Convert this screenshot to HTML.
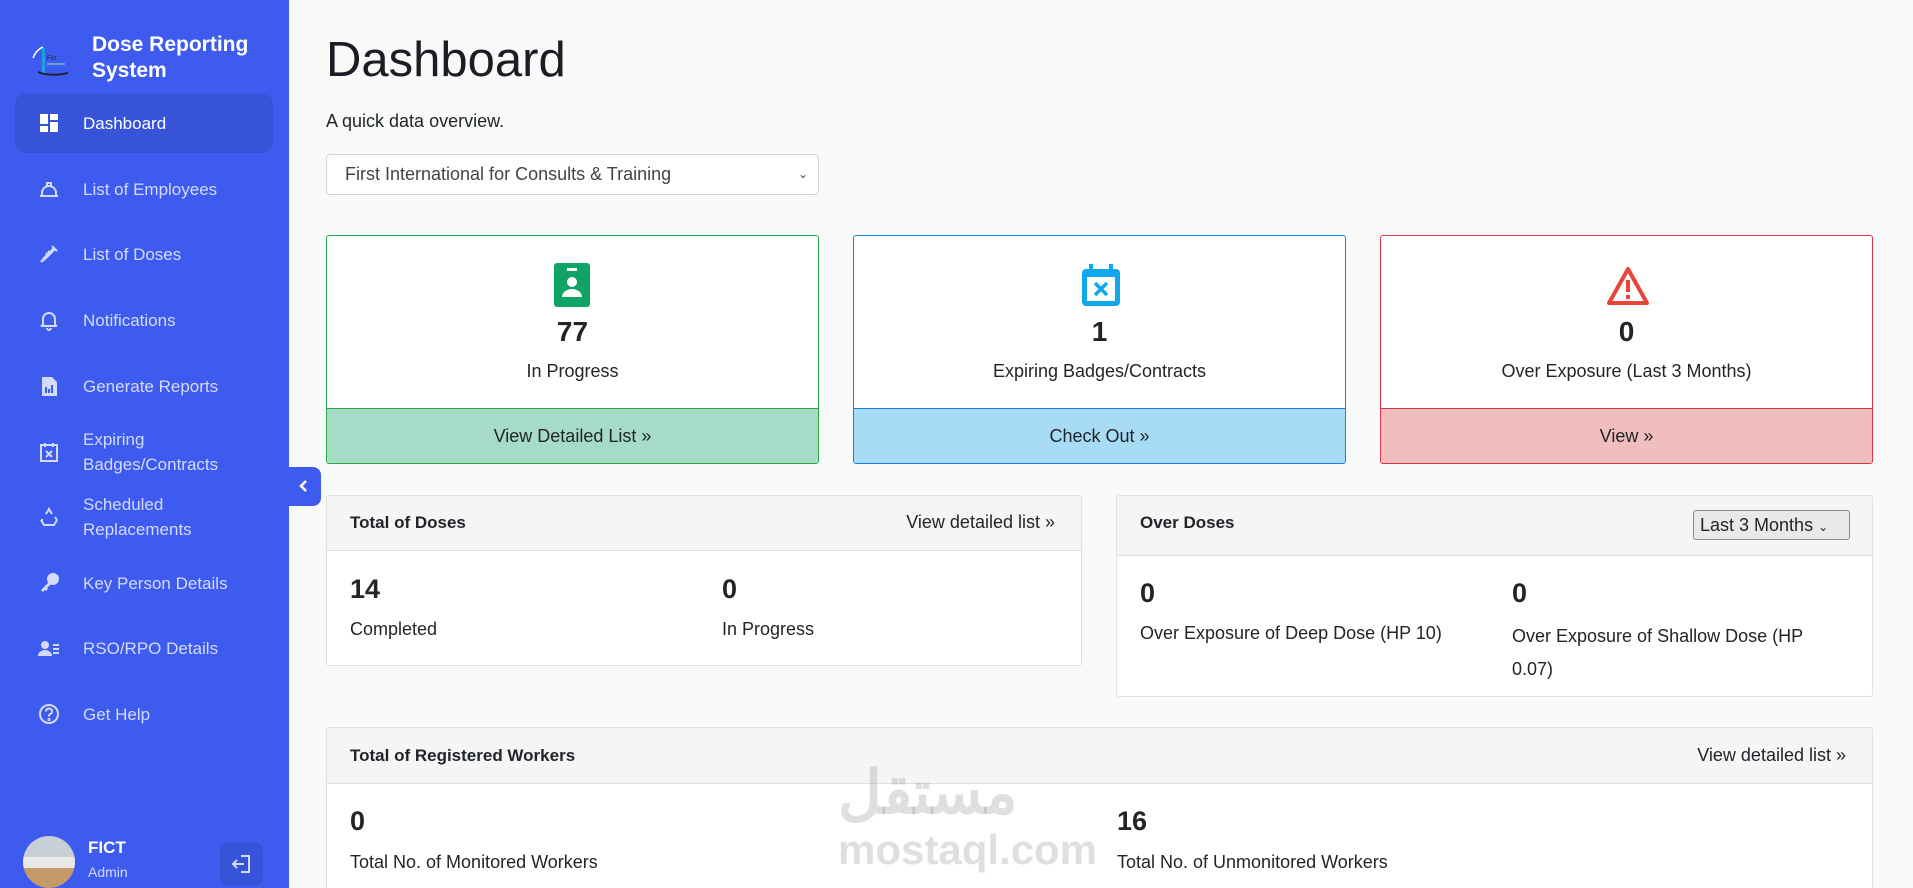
<!DOCTYPE html>
<html style="overflow:hidden;height:888px"><head><meta charset="utf-8"><style>
*{box-sizing:border-box;margin:0;padding:0}
html,body{overflow:hidden}
body{width:1913px;height:888px;background:#f8f9f9;font-family:"Liberation Sans",sans-serif;color:#212529;position:relative}
.abs{position:absolute}
.sb{left:0;top:0;width:289px;height:888px;background:#3e5bf0}
.nav{position:absolute;left:83px;color:#d4dafc;font-size:17px;line-height:25px}
.ic{position:absolute;left:38px;width:22px;height:22px}
.card{position:absolute;top:235px;height:229px;background:#fff;border:1px solid;border-radius:3px;overflow:hidden;text-align:center}
.cf{position:absolute;left:0;right:0;bottom:0;height:55px;border-top:1px solid;font-size:18px;line-height:55px}
.panel{position:absolute;background:#fff;border:1px solid #dee2e6;border-radius:3px;overflow:hidden}
.ph{background:#f5f5f5;border-bottom:1px solid #dee2e6;position:absolute;left:0;right:0;top:0}
.b{font-weight:bold}
.big{font-size:27px;font-weight:bold;position:absolute}
.lbl{font-size:18px;position:absolute;line-height:27px}
</style></head><body>
<div class="abs sb">
 <svg class="abs" style="left:30px;top:44px" width="42" height="36" viewBox="0 0 42 36"><path d="M3 14 Q6 6 13 3" stroke="#fff" stroke-width="1.5" fill="none"/><rect x="12" y="4" width="3" height="26" fill="#1aa0e0"/><text x="17" y="16" font-size="6" fill="#222">Fict</text><rect x="17" y="19" width="18" height="2" fill="#6aa0d0"/><path d="M8 28 Q20 33 38 29" stroke="#223" stroke-width="2" fill="none"/></svg>
 <div class="abs b" style="left:92px;top:32px;color:#fff;font-size:21px;line-height:26px">Dose Reporting<br>System</div>
 <div class="abs" style="left:15px;top:94px;width:258px;height:59px;background:#3753d8;border-radius:10px"></div>
 <svg class="ic" style="top:112px" viewBox="0 0 22 22" fill="#fff"><rect x="2" y="2" width="8" height="10"/><rect x="12" y="2" width="8" height="6"/><rect x="2" y="14" width="8" height="6"/><rect x="12" y="10" width="8" height="10"/></svg>
 <div class="nav" style="top:111px;color:#fff">Dashboard</div>
 <svg class="ic" style="top:178px" viewBox="0 0 22 22" fill="none" stroke="#d4dafc" stroke-width="2"><path d="M2 18h18M4 18v-3a7 7 0 0 1 14 0v3M9 9V5h4v4"/></svg>
 <div class="nav" style="top:177px">List of Employees</div>
 <svg class="ic" style="top:243px" viewBox="0 0 22 22" fill="none" stroke="#d4dafc" stroke-width="2"><path d="M14 3l5 5M16 5l-10 10-3 4 4-3 10-10M8 10l2 2M10 8l2 2"/></svg>
 <div class="nav" style="top:242px">List of Doses</div>
 <svg class="ic" style="top:309px" viewBox="0 0 22 22" fill="none" stroke="#d4dafc" stroke-width="2"><path d="M5 16V10a6 6 0 0 1 12 0v6l2 1H3zM9 19a2 2 0 0 0 4 0"/></svg>
 <div class="nav" style="top:308px">Notifications</div>
 <svg class="ic" style="top:375px" viewBox="0 0 22 22" fill="#d4dafc"><path d="M4 2h10l5 5v14H4z"/><rect x="7" y="12" width="2" height="6" fill="#3e5bf0"/><rect x="10" y="14" width="2" height="4" fill="#3e5bf0"/><rect x="13" y="10" width="2" height="8" fill="#3e5bf0"/></svg>
 <div class="nav" style="top:374px">Generate Reports</div>
 <svg class="ic" style="top:441px" viewBox="0 0 22 22" fill="none" stroke="#d4dafc" stroke-width="2"><rect x="3" y="4" width="16" height="16"/><path d="M7 2v4M15 2v4M8 10l6 6M14 10l-6 6"/></svg>
 <div class="nav" style="top:427px">Expiring<br>Badges/Contracts</div>
 <svg class="ic" style="top:506px" viewBox="0 0 22 22" fill="none" stroke="#d4dafc" stroke-width="2"><path d="M8 8l3-5 3 5M3 14l3 5h10l3-5M5 14l-2 0M17 11l2 3"/></svg>
 <div class="nav" style="top:492px">Scheduled<br>Replacements</div>
 <svg class="ic" style="top:572px" viewBox="0 0 22 22" fill="#d4dafc"><circle cx="15" cy="7" r="6"/><path d="M11 10L3 18l2 2 2-2 1 1 2-2-1-1 4-4z"/></svg>
 <div class="nav" style="top:571px">Key Person Details</div>
 <svg class="ic" style="top:637px" viewBox="0 0 22 22" fill="#d4dafc"><circle cx="7" cy="8" r="4"/><path d="M0 19a7 6 0 0 1 14 0z"/><rect x="15" y="7" width="6" height="2"/><rect x="15" y="11" width="6" height="2"/><rect x="15" y="15" width="6" height="2"/></svg>
 <div class="nav" style="top:636px">RSO/RPO Details</div>
 <svg class="ic" style="top:703px" viewBox="0 0 22 22" fill="none" stroke="#d4dafc" stroke-width="2"><circle cx="11" cy="11" r="9"/><path d="M8 8.5a3 3 0 1 1 4 2.8c-1 .4-1 1-1 2.2"/><circle cx="11" cy="16.5" r=".6"/></svg>
 <div class="nav" style="top:702px">Get Help</div>
 <div class="abs" style="left:23px;top:836px;width:52px;height:52px;border-radius:50%;background:linear-gradient(#c8d0d6 0 40%,#e8e8e8 40% 62%,#c49a68 62%)"></div>
 <div class="abs b" style="left:88px;top:838px;color:#fff;font-size:17px">FICT</div>
 <div class="abs" style="left:88px;top:864px;color:#d4dafc;font-size:14px">Admin</div>
 <div class="abs" style="left:220px;top:842px;width:43px;height:44px;background:#3753d8;border-radius:8px"></div>
 <svg class="abs" style="left:231px;top:853px" width="22" height="22" viewBox="0 0 22 22" fill="none" stroke="#d4dafc" stroke-width="2"><path d="M10 3h8v16h-8M2 11h11M6 7l-4 4 4 4"/></svg>
</div>
<div class="abs" style="left:289px;top:467px;width:32px;height:39px;background:#3e5bf0;border-radius:0 8px 8px 0"></div>
<svg class="abs" style="left:296px;top:478px" width="16" height="16" viewBox="0 0 16 16"><path d="M10 3L5 8l5 5" stroke="#fff" stroke-width="2.5" fill="none"/></svg>

<div class="abs" style="left:326px;top:32px;font-size:49px;color:#1c1c24">Dashboard</div>
<div class="abs" style="left:326px;top:111px;font-size:18px">A quick data overview.</div>
<div class="abs" style="left:326px;top:154px;width:493px;height:41px;background:#fff;border:1px solid #ced4da;border-radius:4px;font-size:18px;line-height:39px;padding-left:18px;color:#444">First International for Consults &amp; Training<span style="position:absolute;right:10px;font-size:12px">&#8964;</span></div>

<div class="card" style="left:326px;width:493px;border-color:#28a745">
 <svg class="abs" style="left:227px;top:27px" width="36" height="44" viewBox="0 0 36 44"><rect width="36" height="44" rx="3" fill="#0fa365"/><rect x="13" y="5" width="10" height="3" fill="#fff"/><circle cx="18" cy="19" r="5" fill="#fff"/><path d="M8 34a10 8 0 0 1 20 0z" fill="#fff"/></svg>
 <div class="abs b" style="width:100%;top:80px;font-size:28px">77</div>
 <div class="abs" style="width:100%;top:125px;font-size:18px">In Progress</div>
 <div class="cf" style="background:#a6dbc8;border-color:#28a745">View Detailed List »</div>
</div>
<div class="card" style="left:853px;width:493px;border-color:#1a7fe8">
 <svg class="abs" style="left:226px;top:27px" width="42" height="44" viewBox="0 0 42 44"><rect x="2" y="6" width="38" height="37" rx="4" fill="#0fa8ec"/><rect x="9" y="1" width="4" height="8" fill="#0fa8ec"/><rect x="29" y="1" width="4" height="8" fill="#0fa8ec"/><rect x="7" y="14" width="28" height="24" fill="#fff"/><path d="M15 20l12 12M27 20L15 32" stroke="#0fa8ec" stroke-width="3.5"/></svg>
 <div class="abs b" style="width:100%;top:80px;font-size:28px">1</div>
 <div class="abs" style="width:100%;top:125px;font-size:18px">Expiring Badges/Contracts</div>
 <div class="cf" style="background:#a8dbf5;border-color:#1a7fe8">Check Out »</div>
</div>
<div class="card" style="left:1380px;width:493px;border-color:#dc3545">
 <svg class="abs" style="left:225px;top:30px" width="44" height="40" viewBox="0 0 44 40"><path d="M22 3L3 37h38z" fill="none" stroke="#e8443a" stroke-width="4" stroke-linejoin="round"/><rect x="20" y="14" width="4" height="12" fill="#e8443a"/><rect x="20" y="29" width="4" height="4" fill="#e8443a"/></svg>
 <div class="abs b" style="width:100%;top:80px;font-size:28px">0</div>
 <div class="abs" style="width:100%;top:125px;font-size:18px">Over Exposure (Last 3 Months)</div>
 <div class="cf" style="background:#f0bebe;border-color:#dc3545">View »</div>
</div>

<div class="panel" style="left:326px;top:495px;width:756px;height:171px">
 <div class="ph" style="height:55px"></div>
 <div class="abs b" style="left:23px;top:17px;font-size:17px">Total of Doses</div>
 <div class="abs" style="right:26px;top:16px;font-size:18px">View detailed list »</div>
 <div class="big" style="left:23px;top:78px">14</div><div class="lbl" style="left:23px;top:120px">Completed</div>
 <div class="big" style="left:395px;top:78px">0</div><div class="lbl" style="left:395px;top:120px">In Progress</div>
</div>
<div class="panel" style="left:1116px;top:495px;width:757px;height:202px">
 <div class="ph" style="height:60px"></div>
 <div class="abs b" style="left:23px;top:17px;font-size:17px">Over Doses</div>
 <div class="abs" style="left:576px;top:14px;width:157px;height:30px;border:1px solid #888;border-radius:3px;background:#e9e9ea;font-size:18px;line-height:28px;padding-left:6px">Last 3 Months <span style="font-size:12px">&#8964;</span></div>
 <div class="big" style="left:23px;top:82px">0</div><div class="lbl" style="left:23px;top:124px">Over Exposure of Deep Dose (HP 10)</div>
 <div class="big" style="left:395px;top:82px">0</div><div class="lbl" style="left:395px;top:124px;width:300px;line-height:33px">Over Exposure of Shallow Dose (HP 0.07)</div>
</div>
<div class="panel" style="left:326px;top:727px;width:1547px;height:170px">
 <div class="ph" style="height:56px"></div>
 <div class="abs b" style="left:23px;top:18px;font-size:17px">Total of Registered Workers</div>
 <div class="abs" style="right:26px;top:17px;font-size:18px">View detailed list »</div>
 <div class="big" style="left:23px;top:78px">0</div><div class="lbl" style="left:23px;top:121px">Total No. of Monitored Workers</div>
 <div class="big" style="left:790px;top:78px">16</div><div class="lbl" style="left:790px;top:121px">Total No. of Unmonitored Workers</div>
</div>
<div class="abs" style="left:838px;top:758px;font-size:60px;line-height:70px;color:rgba(140,140,140,.28);font-weight:bold;font-family:'Liberation Sans','Noto Sans CJK SC',sans-serif">مستقل</div>
<div class="abs" style="left:838px;top:826px;font-size:42px;font-weight:bold;color:rgba(140,140,140,.28)">mostaql.com</div>
</body></html>
